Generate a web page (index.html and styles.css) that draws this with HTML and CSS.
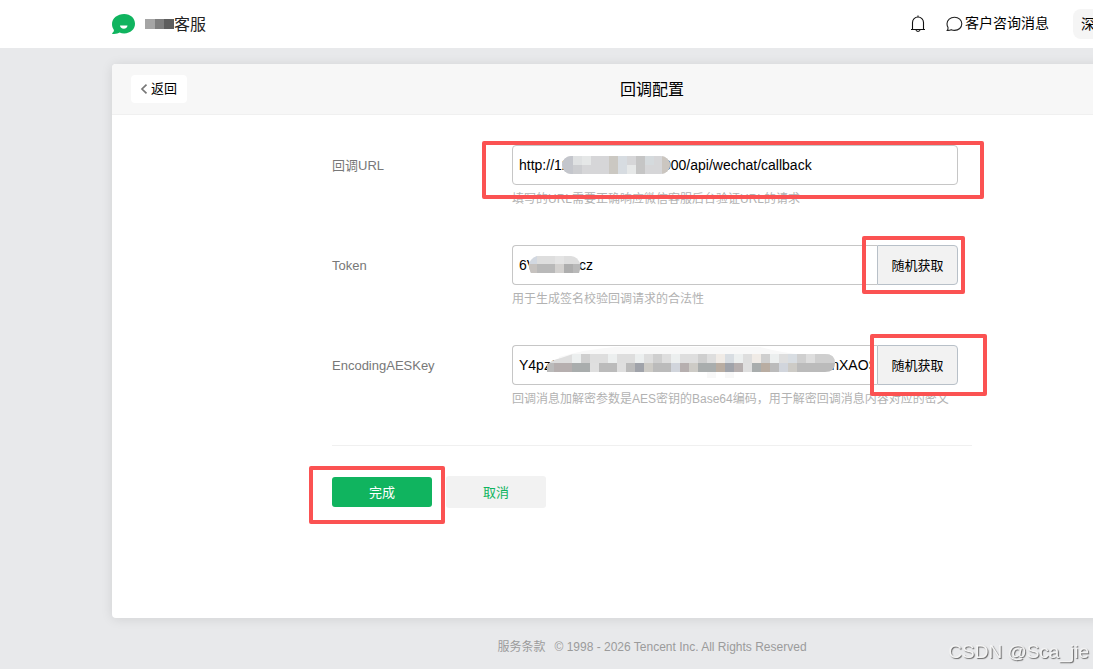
FILE: index.html
```html
<!DOCTYPE html>
<html lang="zh-CN">
<head>
<meta charset="utf-8">
<title>回调配置</title>
<link rel="stylesheet" href="styles.css">
</head>
<body>
<header class="topbar">
  <div class="brand">
    <svg class="brand-logo" width="24" height="22" viewBox="0 0 24 22" aria-hidden="true">
      <path fill="#10b45f" d="M12.2 1C18.600 1 23 5.300 23 10.800S18.600 20.400 12.200 20.400c-1.700 0-3.200-.3-4.600-.9-1.300.9-3.800 1.700-7 1.400-.6-.1-.7-.7-.2-1 1.100-.8 1.600-1.800 1.500-3C.7 15.200 0 13.300 0 11 0 5.200 5.600 1 12.200 1z"/>
      <path fill="#fff" d="M8 12.500h7.500c0 2-1.600 3.200-3.700 3.200S8 14.500 8 12.500z"/>
    </svg>
    <svg class="brand-mask" width="29" height="10" aria-hidden="true"><path fill="#a5a5a5" d="M0 0h10v10H0z"/><path fill="#7e7e7e" d="M10 0h9v10h-9z"/><path fill="#5e5e5e" d="M19 0h10v10H19z"/></svg>
    <span class="brand-name">客服</span>
  </div>
  <nav class="tools">
    <button class="tool" type="button" aria-label="通知">
      <svg width="16" height="18" viewBox="0 0 16 18" fill="none" stroke="#111" stroke-width="1.100" aria-hidden="true"><path d="M1 14.500h14M2.500 14.500V7.500a5.500 5.500 0 0 1 11 0v7M8 2V.5M6 15c.3 1.800 3.700 1.800 4 0"/></svg>
    </button>
    <button class="tool" type="button">
      <svg width="17" height="16" viewBox="0 0 17 16" fill="none" stroke="#222" stroke-width="1.100" aria-hidden="true"><path d="M8.500 1.200c4.200 0 7.300 2.900 7.300 6.600s-3.100 6.600-7.300 6.600c-1.200 0-2.300-.3-3.300-.7-1 .6-2.300.8-3.900.7.600-.8.900-1.700.7-3C1.300 10.400 1 9.200 1 7.800c0-3.700 3.300-6.600 7.500-6.600z"/></svg>
      <span class="tool-text">客户咨询消息</span>
    </button>
    <button class="account" type="button">深</button>
  </nav>
</header>

<main class="page">
  <section class="card">
    <div class="card-head">
      <a class="back" href="#">
        <svg width="8" height="10" viewBox="0 0 8 10" fill="none" stroke="#777" stroke-width="1.700" aria-hidden="true"><path d="M6.500.7 2 5l4.500 4.300"/></svg>
        返回
      </a>
      <h1 class="title">回调配置</h1>
    </div>

    <form class="form">
      <div class="row">
        <label class="label" for="url">回调URL</label>
        <div class="field">
          <div class="control">
            <input class="input" id="url" type="text" value="http://120.000.000.00:8000/api/wechat/callback">
            <svg class="mask mask-url" width="108" height="19" aria-hidden="true">
              <defs><clipPath id="clip-url"><rect width="108" height="18" rx="9"/></clipPath></defs>
              <g clip-path="url(#clip-url)">
                <path fill="#d6d6d8" d="M0 0h108v19H0z"/><path fill="#c4c6cc" d="M0 0h11v19H0z"/><path fill="#dfe1e2" d="M11 0h9v9h-9z"/><path fill="#cccdd0" d="M11 9h9v10h-9z"/><path fill="#e5e7e7" d="M20 0h9v9h-9z"/><path fill="#cbc8c2" d="M47 0h9v19h-9z"/><path fill="#d7dce1" d="M56 0h9v19h-9z"/><path fill="#e6e8e8" d="M65 9h9v10h-9z"/><path fill="#c5c5c5" d="M74 0h9v19h-9z"/><path fill="#d5dadd" d="M83 0h9v9h-9z"/><path fill="#cbc6c0" d="M100 0h9v19h-9z"/>
              </g>
            </svg>
          </div>
          <p class="hint">填写的URL需要正确响应微信客服后台验证URL的请求</p>
          <span class="mark mark-url"></span>
        </div>
      </div>

      <div class="row">
        <label class="label" for="token">Token</label>
        <div class="field">
          <div class="control">
            <input class="input input-joined" id="token" type="text" value="6V00000:cz">
            <button class="random" type="button">随机获取</button>
            <svg class="mask mask-token" width="54" height="18" aria-hidden="true">
              <defs><clipPath id="clip-token"><path d="M9 0h34q7 0 10 10l-2 7H3Q-3 5 9 0z"/></clipPath></defs>
              <g clip-path="url(#clip-token)">
                <path fill="#dedede" d="M0 0h54v8H0z"/><path fill="#d2d8e1" d="M0 0h9v8H0z"/><path fill="#b9b9b9" d="M0 8h54v10H0z"/><path fill="#c6c2bf" d="M0 8h9v10H0z"/><path fill="#d3d1cf" d="M27 8h9v10h-9z"/><path fill="#aeaeae" d="M36 8h9v10h-9z"/><path fill="#e4e4e4" d="M27 0h9v8h-9z"/>
              </g>
            </svg>
          </div>
          <p class="hint">用于生成签名校验回调请求的合法性</p>
          <span class="mark mark-token"></span>
        </div>
      </div>

      <div class="row">
        <label class="label" for="aes">EncodingAESKey</label>
        <div class="field">
          <div class="control">
            <input class="input input-joined" id="aes" type="text" value="Y4pz000000000000000000000000000000000000nXAOS">
            <button class="random" type="button">随机获取</button>
            <svg class="mask mask-aes" width="290" height="34" aria-hidden="true">
              <defs><clipPath id="clip-aes"><path d="M0 27V20Q4 15 14 13L26 9H278q10 0 10 9t-10 9z"/></clipPath></defs>
              <path fill="#f8f8f8" d="M12 12Q40 4 68 2h145q22 6 45 8v17H12zM160 26h9v7h-9zM178 26h9v7h-9z"/>
              <g clip-path="url(#clip-aes)">
                <path fill="#dedede" d="M0 8h290v10H0z"/>
                <path fill="#bbb" d="M0 18h290v9H0z"/>
                <path fill="#ecefef" d="M25 9h9v9h-9zM61 9h9v9h-9zM88 9h9v9h-9zM124 9h9v9h-9zM187 9h9v9h-9zM223 9h9v9h-9z"/>
                <path fill="#cfcfcf" d="M34 9h9v9h-9zM106 9h9v9h-9zM151 9h9v9h-9zM214 9h9v9h-9zM250 9h9v9h-9zM268 9h22v9h-22z"/>
                <path fill="#f0ebe6" d="M169 9h9v9h-9zM205 9h9v9h-9z"/>
                <path fill="#d8dde2" d="M178 9h9v9h-9zM241 9h9v9h-9z"/>
                <path fill="#b6afaf" d="M7 18h18v9H7zM133 18h9v9h-9zM187 18h9v9h-9z"/>
                <path fill="#a9adad" d="M25 18h18v9H25zM151 18h18v9h-18zM205 18h9v9h-9z"/>
                <path fill="#dfdfdf" d="M43 18h9v9h-9zM70 18h9v9h-9zM196 18h9v9h-9z"/>
                <path fill="#a0a3aa" d="M88 18h9v9h-9zM178 18h9v9h-9z"/>
                <path fill="#cdcbc6" d="M97 18h9v9h-9zM142 18h9v9h-9zM241 18h9v9h-9z"/>
                <path fill="#d1d5dc" d="M124 18h9v9h-9zM232 18h9v9h-9z"/>
                <path fill="#b9ada2" d="M169 18h9v9h-9zM214 18h9v9h-9z"/>
              </g>
            </svg>
          </div>
          <p class="hint">回调消息加解密参数是AES密钥的Base64编码，用于解密回调消息内容对应的密文</p>
          <span class="mark mark-aes"></span>
        </div>
      </div>

      <div class="actions">
        <button class="btn btn-primary" type="submit">完成</button>
        <button class="btn btn-plain" type="button">取消</button>
        <span class="mark mark-done"></span>
      </div>
    </form>
  </section>

  <footer class="footer">
    <a class="terms" href="#">服务条款</a>
    <span>© 1998 - 2026 Tencent Inc. All Rights Reserved</span>
  </footer>
</main>
<div class="watermark">CSDN @Sca_jie</div>
</body>
</html>
```

FILE: styles.css
```css
* {
  box-sizing: border-box;
}

html {
  overflow: hidden;
}

body {
  margin: 0;
  min-width: 1304px;
  background: #e8e9eb;
  color: #000;
  font-family: "Liberation Sans", "Noto Sans CJK SC", sans-serif;
  font-size: 13px;
  line-height: 20px;
}

button,
input {
  margin: 0;
  font-family: inherit;
  color: inherit;
}

a {
  color: inherit;
  text-decoration: none;
}

.topbar {
  display: flex;
  align-items: center;
  justify-content: space-between;
  height: 48px;
  padding: 0 112px;
  background: #fff;
}

.brand {
  display: flex;
  align-items: center;
}

.brand-mask {
  margin-left: 9px;
}

.brand-name {
  padding-top: 2px;
  font-size: 16px;
  color: #222;
}

.tools {
  display: flex;
  align-items: center;
  gap: 20px;
}

.tool {
  display: flex;
  align-items: center;
  gap: 2px;
  padding: 0;
  border: 0;
  background: none;
  font-size: 14px;
  line-height: 20px;
}

.tool-text {
  padding-bottom: 2px;
}

.account {
  width: 119px;
  height: 30px;
  margin-left: 4px;
  padding: 0 8px 2px;
  border: 0;
  border-radius: 8px;
  background: #f5f5f5;
  font-size: 14px;
  text-align: left;
}

.page {
  padding: 16px 112px 0;
}

.card {
  min-height: 554px;
  border-radius: 4px;
  background: #fff;
  box-shadow: 0 1px 12px rgba(0, 0, 0, 0.1);
}

.card-head {
  display: grid;
  grid-template-columns: 1fr auto 1fr;
  align-items: center;
  height: 51px;
  padding: 0 19px;
  border-bottom: 1px solid #f0f0f0;
  border-radius: 4px 4px 0 0;
  background: #f7f7f7;
}

.back {
  display: flex;
  align-items: center;
  justify-self: start;
  gap: 3px;
  height: 28px;
  padding: 0 10px 0 9px;
  border-radius: 4px;
  background: #fff;
}

.title {
  margin: 0;
  padding-top: 2px;
  font-size: 16px;
  font-weight: 400;
}

.form {
  width: 640px;
  margin: 0 auto;
  padding-top: 30px;
}

.row {
  display: grid;
  grid-template-columns: 180px 446px;
  min-height: 100px;
}

.label {
  height: 42px;
  line-height: 42px;
  color: #787878;
}

.field {
  position: relative;
}

.control {
  position: relative;
  display: flex;
}

.input {
  flex: 1;
  min-width: 0;
  height: 40px;
  padding: 0 6px;
  border: 1px solid #c6c6c6;
  border-radius: 4px;
  background: #fff;
  font-size: 14px;
}

.input-joined {
  padding-right: 4px;
  border-right: 0;
  border-radius: 4px 0 0 4px;
}

.random {
  width: 81px;
  height: 40px;
  padding: 0 0 2px;
  border: 1px solid #b8c0c8;
  border-radius: 0 4px 4px 0;
  background: #f2f2f2;
  font-size: 13px;
}

.hint {
  margin: 4px 0 0;
  font-size: 12px;
  white-space: nowrap;
  color: #b2b2b2;
}

.actions {
  position: relative;
  display: flex;
  align-items: center;
  gap: 14px;
  padding-top: 30px;
  border-top: 1px solid #f0f0f0;
}

.btn {
  width: 100px;
  height: 30px;
  padding: 0 0 2px;
  border: 0;
  border-radius: 3px;
  font-size: 13px;
}

.btn-primary {
  background: #10b45f;
  color: #fff;
}

.btn-plain {
  height: 32px;
  background: #f2f2f2;
  color: #10b45f;
}

.footer {
  display: flex;
  justify-content: center;
  gap: 9px;
  padding: 19px 0 12px;
  font-size: 12px;
  color: #9b9b9b;
}

/* Mosaic patches over private values */
.mask {
  position: absolute;
  pointer-events: none;
}

.mask-url {
  left: 50px;
  top: 11px;
}

.mask-token {
  left: 16px;
  top: 11px;
}

.mask-aes {
  left: 35px;
  top: 0;
}

/* Red highlight frames */
.mark {
  position: absolute;
  border: 4px solid #fb5252;
  border-radius: 2px;
  pointer-events: none;
}

.mark-url {
  left: -30px;
  top: -4px;
  width: 502px;
  height: 58px;
}

.mark-token {
  left: 350px;
  top: -9px;
  width: 103px;
  height: 58px;
}

.mark-aes {
  left: 358px;
  top: -11px;
  width: 117px;
  height: 62px;
}

.mark-done {
  left: -23px;
  top: 20px;
  width: 136px;
  height: 58px;
}

.watermark {
  position: fixed;
  right: 4px;
  bottom: 3px;
  font-size: 19px;
  line-height: 28px;
  color: #f4f4f4;
  text-shadow: 1px 1px 1px #666;
}
```
